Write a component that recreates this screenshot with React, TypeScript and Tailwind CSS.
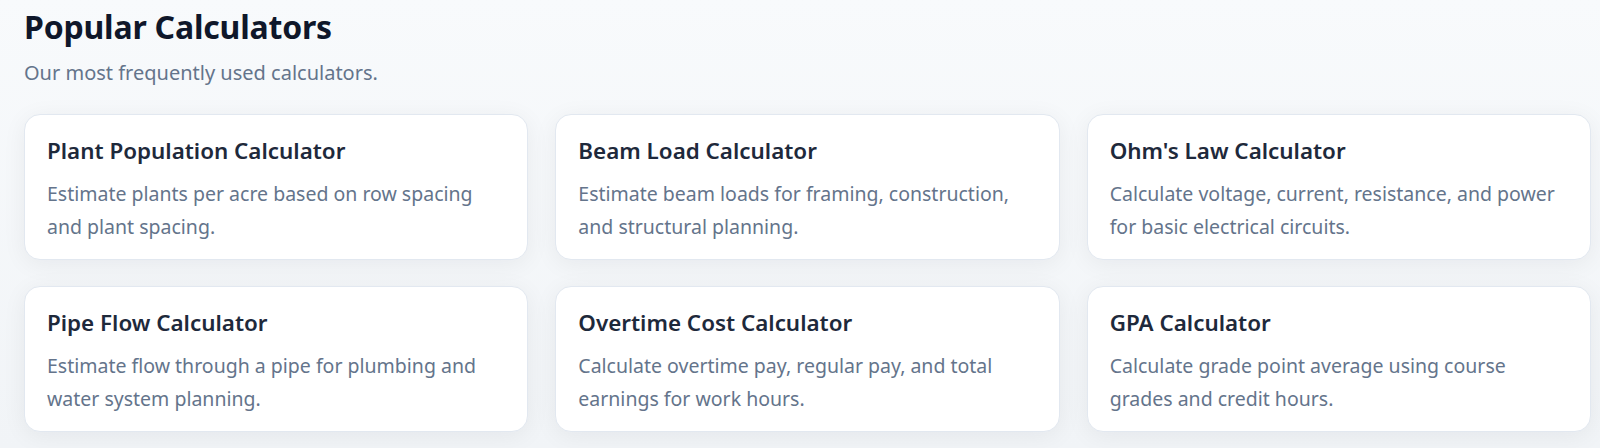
const calculators = [
  {
    title: "Plant Population Calculator",
    description: "Estimate plants per acre based on row spacing and plant spacing.",
  },
  {
    title: "Beam Load Calculator",
    description: "Estimate beam loads for framing, construction, and structural planning.",
  },
  {
    title: "Ohm's Law Calculator",
    description: "Calculate voltage, current, resistance, and power for basic electrical circuits.",
  },
  {
    title: "Pipe Flow Calculator",
    description: "Estimate flow through a pipe for plumbing and water system planning.",
  },
  {
    title: "Overtime Cost Calculator",
    description: "Calculate overtime pay, regular pay, and total earnings for work hours.",
  },
  {
    title: "GPA Calculator",
    description: "Calculate grade point average using course grades and credit hours.",
  },
];

const App: React.FC = () => {
  return (
    <section className="min-h-[448px] bg-gradient-to-b from-[#f8fafc] to-[#f1f4f7] pl-6 pr-[9px] pt-[7px] font-['Noto_Sans',sans-serif]">
      <h2 className="text-[32px] leading-[40px] font-bold text-[#0f172a] tracking-[-0.2px]">
        Popular Calculators
      </h2>
      <p className="mt-[12px] text-[20px] leading-7 text-[#64748b]">
        Our most frequently used calculators.
      </p>
      <div className="mt-[27px] grid grid-cols-3 gap-x-[27px] gap-y-[26px]">
        {calculators.map((calc) => (
          <a
            key={calc.title}
            href="#"
            className="block h-[146px] rounded-2xl border border-[#e2e8f0] bg-white px-[22px] pt-[21px] shadow-[0_4px_24px_rgba(15,23,42,0.06)]"
          >
            <h3 className="text-[22.4px] leading-[30px] font-semibold text-[#1e293b]">
              {calc.title}
            </h3>
            <p className="mt-[11px] max-w-[450px] text-[19.5px] leading-[33px] text-[#64748b]">
              {calc.description}
            </p>
          </a>
        ))}
      </div>
    </section>
  );
};

export default App;
